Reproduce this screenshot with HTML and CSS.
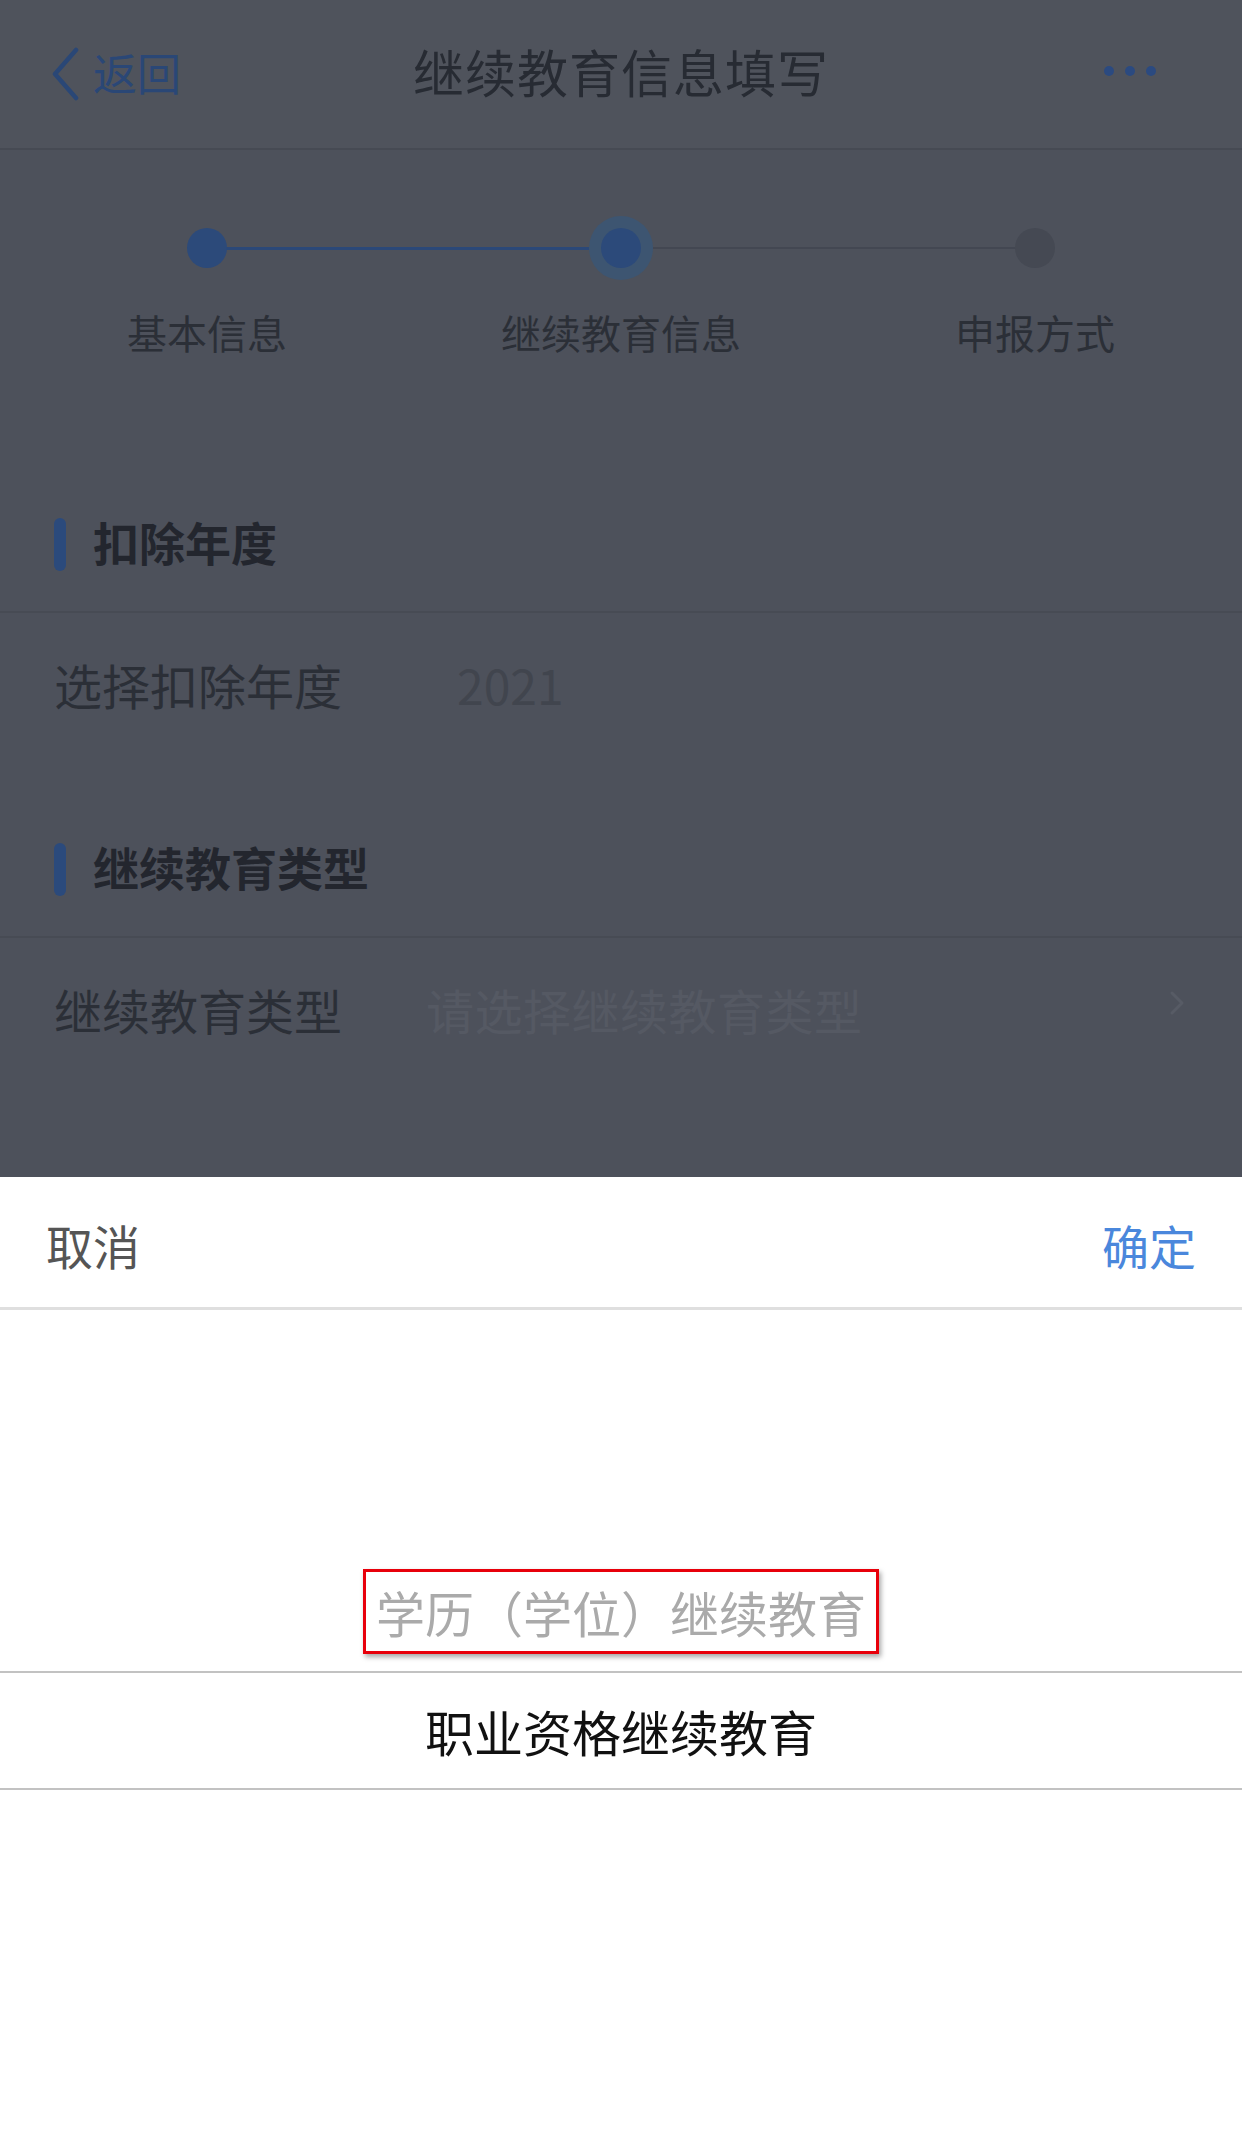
FILE: index.html
```html
<!DOCTYPE html>
<html lang="zh-CN">

<head>
    <meta charset="UTF-8">
    <meta name="viewport" content="width=device-width, initial-scale=1.0">
    <title>继续教育信息填写</title>
    <link rel="stylesheet" href="styles.css">
</head>

<body>
    <div class="page">
        <div class="nav">
            <div class="back">
                <svg class="back_icon" width="30" height="54" viewBox="0 0 30 54">
                    <path d="M26 3 L5 27 L26 51" fill="none" stroke="#2a4776" stroke-width="4.5" stroke-linecap="round" stroke-linejoin="round"/>
                </svg>
                <span>返回</span>
            </div>
            <div class="title">继续教育信息填写</div>
            <div class="more">
                <i></i><i></i><i></i>
            </div>
        </div>

        <div class="steps">
            <div class="step done">
                <div class="dot_box"><span class="dot"></span></div>
                <div class="step_name">基本信息</div>
            </div>
            <div class="step current">
                <div class="dot_box"><span class="dot"></span></div>
                <div class="step_name">继续教育信息</div>
            </div>
            <div class="step">
                <div class="dot_box"><span class="dot"></span></div>
                <div class="step_name">申报方式</div>
            </div>
        </div>

        <div class="sec_head">
            <span class="bar"></span>
            <span class="sec_title">扣除年度</span>
        </div>
        <div class="row">
            <span class="label">选择扣除年度</span>
            <span class="value year">2021</span>
        </div>

        <div class="sec_head">
            <span class="bar"></span>
            <span class="sec_title">继续教育类型</span>
        </div>
        <div class="row">
            <span class="label">继续教育类型</span>
            <span class="value placeholder">请选择继续教育类型</span>
            <svg class="arrow" width="18" height="26" viewBox="0 0 18 26">
                <path d="M4 3 L14 13 L4 23" fill="none" stroke="#575b65" stroke-width="3" stroke-linecap="round" stroke-linejoin="round"/>
            </svg>
        </div>
    </div>

    <div class="sheet">
        <div class="toolbar">
            <button class="cancel">取消</button>
            <button class="ok">确定</button>
        </div>
        <div class="picker">
            <div class="opt"><span class="mark">学历（学位）继续教育</span></div>
            <div class="opt selected">职业资格继续教育</div>
        </div>
    </div>
</body>

</html>
```
FILE: styles.css
```css
* {
    margin: 0;
    padding: 0;
    box-sizing: border-box;
}

body {
    width: 1242px;
    background-color: #fff;
    font-family: "Noto Sans CJK SC", "Noto Sans", sans-serif;
}

.page {
    height: 1177px;
    overflow: hidden;
    background-color: #4d515b;
}

.nav {
    display: grid;
    grid-template-columns: 1fr auto 1fr;
    align-items: center;
    height: 150px;
    border-bottom: 2px solid #464a53;
    background-color: #4f535c;
}

.back {
    display: flex;
    align-items: center;
    padding-left: 50px;
    color: #2a4776;
    font-size: 44px;
    margin-top: -4px;
}

.back_icon {
    margin-right: 13px;
    margin-top: 4px;
}

.title {
    font-size: 51px;
    color: #272b33;
    letter-spacing: 1px;
    margin-top: -6px;
}

.more {
    display: flex;
    justify-content: flex-end;
    gap: 11px;
    padding-right: 86px;
    margin-top: -6px;
}

.more i {
    width: 10px;
    height: 10px;
    border-radius: 50%;
    background-color: #2b4a80;
}

.steps {
    display: grid;
    grid-template-columns: repeat(3, 1fr);
    height: 280px;
    padding-top: 66px;
}

.step {
    position: relative;
    display: flex;
    flex-direction: column;
    align-items: center;
}

.step + .step::before {
    content: "";
    position: absolute;
    top: 31px;
    right: 50%;
    width: 100%;
    height: 2px;
    background-color: #434752;
}

.step.current::before {
    height: 3px;
    background-color: #2b4878;
}

.dot_box {
    position: relative;
    z-index: 1;
    display: flex;
    align-items: center;
    justify-content: center;
    width: 64px;
    height: 64px;
    border-radius: 50%;
}

.dot {
    width: 40px;
    height: 40px;
    border-radius: 50%;
    background-color: #454953;
}

.done .dot,
.current .dot {
    background-color: #2c4a7a;
}

.current .dot_box {
    background-color: #3d5571;
}

.step_name {
    margin-top: 27px;
    font-size: 40px;
    line-height: 50px;
    color: #2b2f37;
}

.sec_head {
    display: flex;
    align-items: center;
    height: 53px;
    margin-top: 88px;
    margin-bottom: 40px;
    padding-left: 54px;
}

.bar {
    width: 12px;
    height: 53px;
    border-radius: 6px;
    background-color: #2b4a7c;
}

.sec_title {
    margin-left: 27px;
    margin-top: -8px;
    font-size: 46px;
    font-weight: bold;
    color: #23262e;
}

.row {
    display: flex;
    align-items: center;
    height: 144px;
    padding: 0 56px 0 54px;
    border-top: 2px solid #474b54;
}

.label {
    width: 372px;
    font-size: 48px;
    color: #2b2f37;
}

.value {
    flex: 1;
    font-size: 48px;
}

.year {
    padding-left: 31px;
    color: #41454e;
}

.placeholder {
    letter-spacing: 0.5px;
    color: #555963;
}

.arrow {
    margin-top: -12px;
}

.sheet {
    height: 973px;
    background-color: #fff;
}

.toolbar {
    display: flex;
    justify-content: space-between;
    align-items: center;
    height: 133px;
    padding: 4px 46px 0 46px;
    border-bottom: 3px solid #dfdfdf;
}

.toolbar button {
    border: none;
    background: none;
    font-family: inherit;
    font-size: 47px;
}

.cancel {
    color: #555;
}

.ok {
    color: #4a87dc;
}

.picker {
    padding-top: 244px;
}

.opt {
    display: flex;
    align-items: center;
    justify-content: center;
    height: 117px;
    font-size: 49px;
    color: #aaa;
}

.opt.selected {
    height: 119px;
    border-top: 2px solid #c2c2c2;
    border-bottom: 2px solid #c2c2c2;
    color: #111;
}

.mark {
    display: inline-block;
    margin-top: -3px;
    padding: 0 10px;
    line-height: 79px;
    border: 3px solid #e8000b;
    box-shadow: 2px 3px 5px rgba(0, 0, 0, 0.35);
}
```
